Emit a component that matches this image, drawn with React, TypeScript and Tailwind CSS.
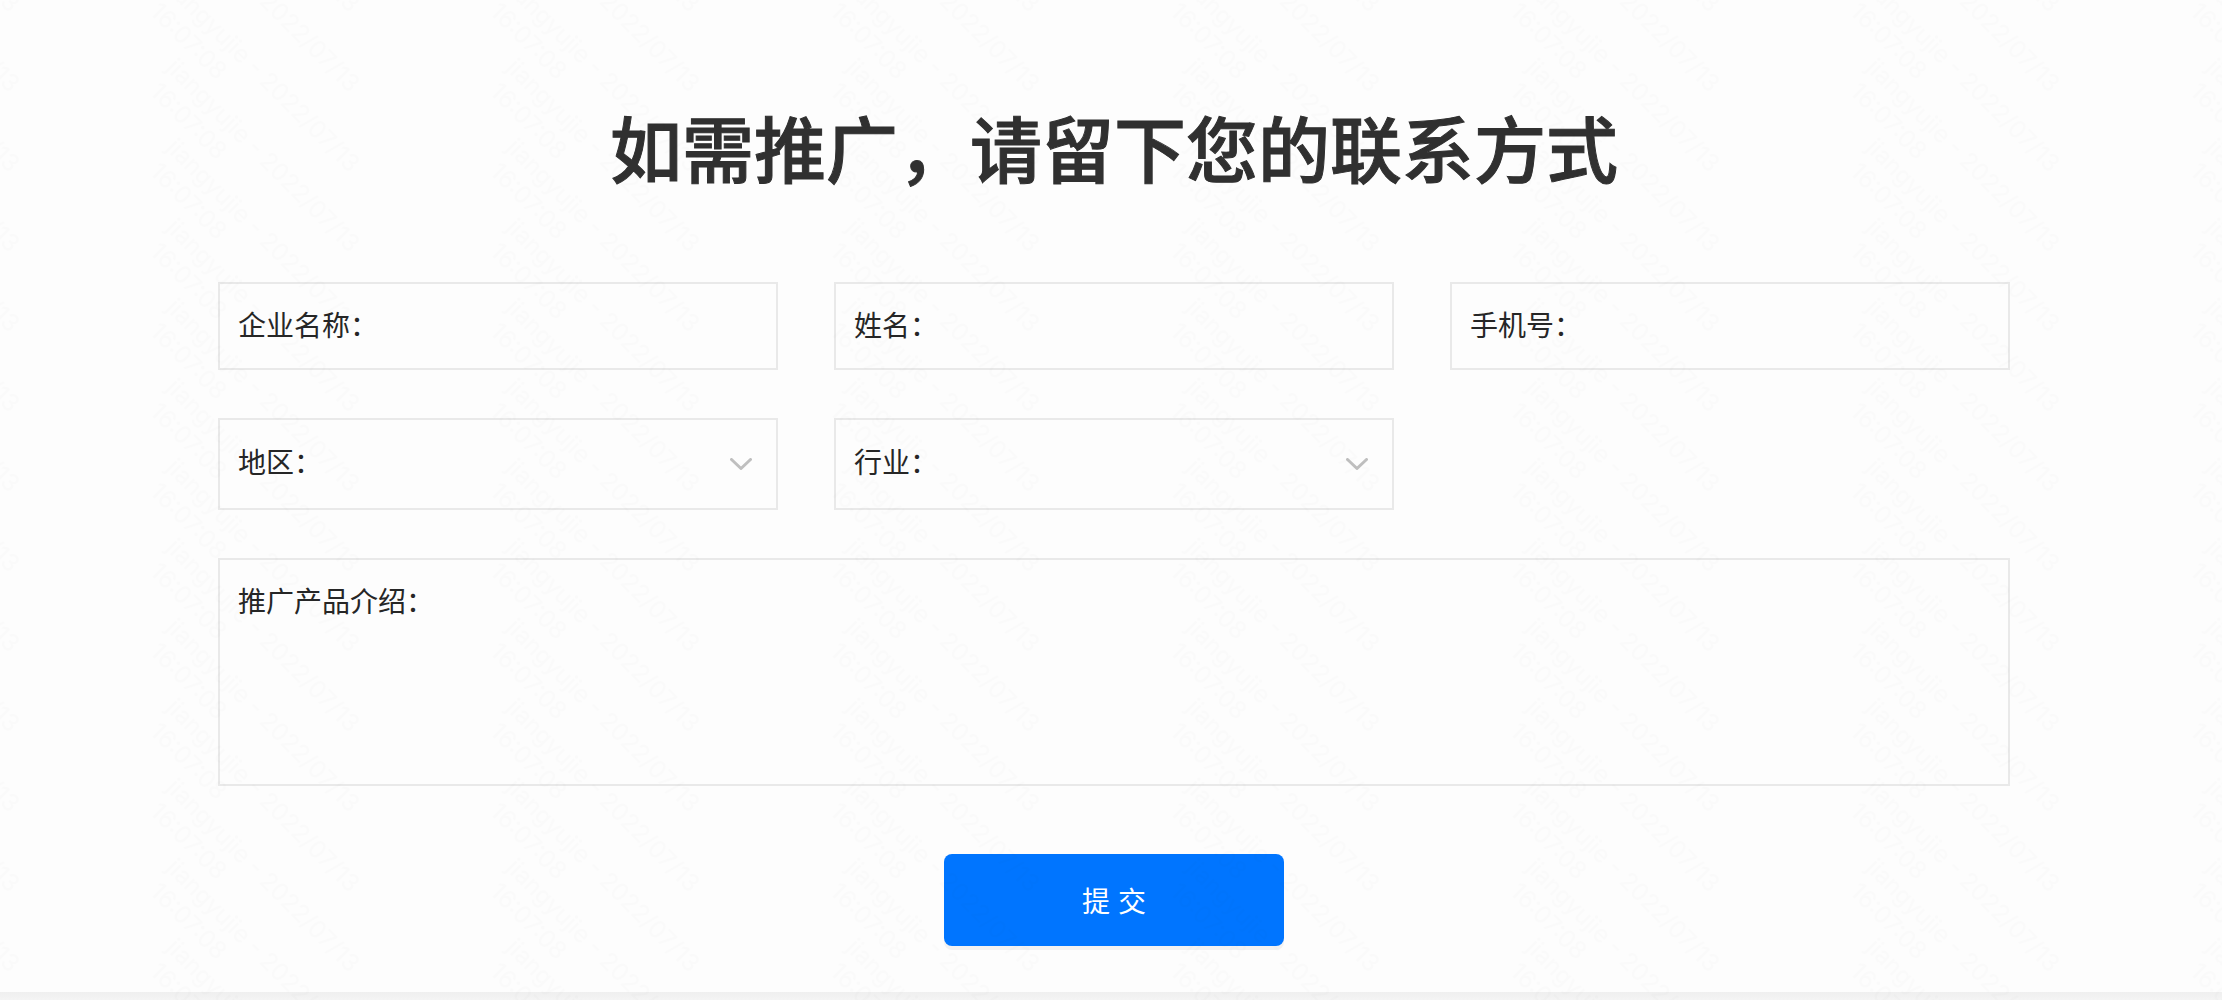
import { useId } from "react";

const regions = ["北京", "上海", "广州", "深圳"];
const industries = ["教育", "金融", "电商", "游戏"];

function TextField({ label, type = "text" }: { label: string; type?: string }) {
  const id = useId();
  return (
    <div className="flex h-22 items-center border-2 border-[#e9e9e9] px-[18px] pt-0.5">
      <label htmlFor={id} className="shrink-0">
        {label}
      </label>
      <input id={id} type={type} className="h-full w-full min-w-0 bg-transparent outline-none" />
    </div>
  );
}

function SelectField({ label, options }: { label: string; options: string[] }) {
  const id = useId();
  return (
    <div className="flex h-23 items-center border-2 border-[#e9e9e9] pl-[18px] pr-6">
      <label htmlFor={id} className="shrink-0">
        {label}
      </label>
      <select
        id={id}
        defaultValue=""
        className="h-full w-full min-w-0 appearance-none bg-transparent outline-none"
      >
        <option value=""></option>
        {options.map((o) => (
          <option key={o} value={o}>
            {o}
          </option>
        ))}
      </select>
      <svg
        className="pointer-events-none shrink-0"
        width="22"
        height="12"
        viewBox="0 0 22 12"
        fill="none"
        stroke="#bfbfbf"
        strokeWidth="3"
        strokeLinecap="round"
        strokeLinejoin="round"
      >
        <path d="M1.5 1.5 11 10.5 20.5 1.5" />
      </svg>
    </div>
  );
}

// each tile repeats the text so that neighbours overlap without being cut
function Watermark() {
  return (
    <svg
      aria-hidden="true"
      className="pointer-events-none absolute inset-0 h-full w-full font-['Inter',sans-serif] text-2xl"
    >
      <defs>
        <pattern id="wm" x="150" y="62" width="340" height="80" patternUnits="userSpaceOnUse">
          {[-240, -160, -80, 0, 80].map((y) => (
            <g key={y} transform={`translate(0 ${y})`} fill="#000" fillOpacity="0.012">
              <text transform="translate(15 7) rotate(45)">jiangyujie - 2022/07/13</text>
              <text transform="translate(-1 31) rotate(45)">16:07:08</text>
            </g>
          ))}
        </pattern>
      </defs>
      <rect width="100%" height="100%" fill="url(#wm)" />
    </svg>
  );
}

export default function App() {
  return (
    <div className="relative flex min-h-screen flex-col overflow-hidden bg-[#fdfdfd] font-['Liberation_Sans','Noto_Sans_CJK_SC',sans-serif] text-[28px] text-[#262626]">
      <main className="grow pb-[46px] pl-1.5 pt-[98px]">
        <form className="mx-auto max-w-[1792px]" onSubmit={(e) => e.preventDefault()}>
          <h1 className="text-center text-7xl leading-[108px] font-medium text-[#303030] [-webkit-text-stroke:1px_#303030]">
            如需推广，请留下您的联系方式
          </h1>
          <div className="mt-19 grid grid-cols-3 gap-x-14 gap-y-12">
            <TextField label="企业名称：" />
            <TextField label="姓名：" />
            <TextField label="手机号：" type="tel" />
            <SelectField label="地区：" options={regions} />
            <SelectField label="行业：" options={industries} />
          </div>
          <div className="mt-12 flex h-57 items-start border-2 border-[#e9e9e9] px-[18px] py-[22px]">
            <label htmlFor="intro" className="shrink-0">
              推广产品介绍：
            </label>
            <textarea id="intro" className="h-full w-full resize-none bg-transparent outline-none" />
          </div>
          <button
            type="submit"
            className="mx-auto mt-17 block h-23 w-[340px] rounded-lg bg-[#0075ff] pt-1.5 text-white shadow-[0_4px_0_#f2f2f2]"
          >
            提 交
          </button>
        </form>
      </main>
      <div className="h-2 bg-linear-to-b from-[#efefef] to-[#f4f4f4]" />
      <Watermark />
    </div>
  );
}
